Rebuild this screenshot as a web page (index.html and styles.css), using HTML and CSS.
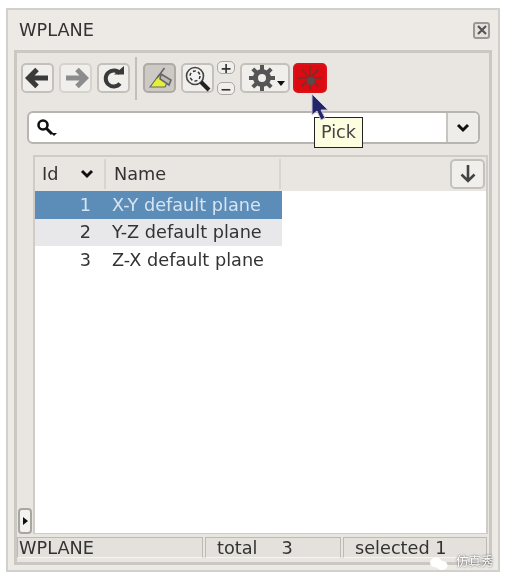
FILE: index.html
```html
<!DOCTYPE html>
<html lang="en">
<head>
  <meta charset="UTF-8" />
  <title>WPLANE</title>
  <link rel="stylesheet" href="styles.css">
</head>
<body>
  <div class="window">
    <header class="titlebar">
      <span>WPLANE</span>
      <button class="close-btn">
        <svg width="12" height="12" viewBox="0 0 12 12"><path d="M2 2l8 8M10 2l-8 8" stroke="#555" stroke-width="2.2" fill="none"/></svg>
      </button>
    </header>

    <main class="panel">
      <!-- Toolbar -->
      <div class="toolbar">
        <button class="tool">
          <svg width="26" height="22" viewBox="0 0 26 22"><path d="M12 2.500L3.500 11l8.500 8.500M4 11h19" stroke="#3a3a3a" stroke-width="5" fill="none"/></svg>
        </button>
        <button class="tool disabled">
          <svg width="26" height="22" viewBox="0 0 26 22"><path d="M14 2.500l8.500 8.500-8.500 8.500M22 11H3" stroke="#8c8c8c" stroke-width="5" fill="none"/></svg>
        </button>
        <button class="tool">
          <svg width="26" height="24" viewBox="0 0 26 24"><path d="M19 7.500A8 8 0 1 0 19 17.500" stroke="#3a3a3a" stroke-width="4" fill="none"/><path d="M13 8.500h10V0z" fill="#3a3a3a"/></svg>
        </button>
        <span class="sep"></span>
        <button class="tool pressed">
          <svg width="28" height="24" viewBox="0 0 28 24"><path d="M4 21l9-12 9 6-3 6z" fill="#e4f03c" stroke="#666" stroke-width="1.200"/><path d="M18.500 2L11 12" stroke="#666" stroke-width="1.600" fill="none"/><path d="M15 8l10 6-2 5-9-6z" fill="#bdbab6" stroke="#666" stroke-width="1.600"/></svg>
        </button>
        <button class="tool">
          <svg width="28" height="27" viewBox="0 0 28 27"><circle cx="11" cy="11" r="8.500" fill="#f2f2f2" stroke="#444" stroke-width="1.600"/><circle cx="11" cy="11" r="5" fill="none" stroke="#333" stroke-width="1.500" stroke-dasharray="3 2.200"/><path d="M17 17l8 8" stroke="#222" stroke-width="4"/></svg>
        </button>
        <div class="zoom-steps">
          <button class="step">+</button>
          <button class="step">&minus;</button>
        </div>
        <button class="tool wide">
          <svg width="28" height="28" viewBox="0 0 28 28"><circle cx="14" cy="14" r="6.500" fill="none" stroke="#555" stroke-width="5"/><path d="M14 1v6M14 21v6M1 14h6M21 14h6M4.800 4.800l4.200 4.200M19 19l4.200 4.200M23.200 4.800L19 9M9 19l-4.200 4.200" stroke="#555" stroke-width="4"/></svg>
          <span class="mini-arrow"></span>
        </button>
        <button class="tool pick">
          <svg width="26" height="26" viewBox="0 0 26 26"><path d="M13 1v24M1 13h24M4.500 4.500l17 17M21.500 4.500l-17 17" stroke="#8f2626" stroke-width="2"/><circle cx="14" cy="16" r="4" fill="#5a4a4a"/></svg>
        </button>
      </div>

      <!-- Search -->
      <div class="search">
        <div class="search-icon">
          <svg width="22" height="20" viewBox="0 0 22 20"><circle cx="7" cy="7" r="4.500" fill="none" stroke="#111" stroke-width="2.600"/><path d="M10 10l6 6" stroke="#111" stroke-width="3"/><path d="M15 15h6l-3 3z" fill="#111"/></svg>
        </div>
        <div class="search-drop">
          <svg width="14" height="10" viewBox="0 0 14 10"><path d="M2 2l5 5 5-5" stroke="#111" stroke-width="3" fill="none"/></svg>
        </div>
      </div>

      <!-- List -->
      <div class="list-area">
        <div class="side-strip">
          <button class="side-btn"><span class="side-arrow"></span></button>
        </div>
        <div class="list">
          <div class="list-head">
            <div class="col-id">
              <span>Id</span>
              <svg width="14" height="10" viewBox="0 0 14 10"><path d="M2 2l5 5 5-5" stroke="#111" stroke-width="3" fill="none"/></svg>
            </div>
            <div class="col-name">Name</div>
            <div class="col-rest">
              <button class="down-btn">
                <svg width="18" height="20" viewBox="0 0 18 20"><path d="M9 1v16M2.500 10.500L9 17l6.500-6.500" stroke="#444" stroke-width="2.600" fill="none"/></svg>
              </button>
            </div>
          </div>
          <div class="row selected"><span class="num">1</span><span>X-Y default plane</span></div>
          <div class="row alt"><span class="num">2</span><span>Y-Z default plane</span></div>
          <div class="row"><span class="num">3</span><span>Z-X default plane</span></div>
        </div>
      </div>

      <!-- Status bar -->
      <footer class="status">
        <div class="cell cell-name">WPLANE</div>
        <div class="cell cell-total"><span>total</span><span>3</span></div>
        <div class="cell cell-sel">selected 1</div>
      </footer>
    </main>

    <div class="tooltip">Pick</div>
    <svg class="cursor" width="20" height="28" viewBox="0 0 20 28"><path d="M1 1v21l5-4 4 9 4-2-4-8h7z" fill="#24246a" stroke="#c8c8d8" stroke-width="1"/></svg>
    <div class="watermark">
      <svg width="18" height="13" viewBox="0 0 18 13"><ellipse cx="6" cy="5.500" rx="6" ry="5" fill="#fff"/><ellipse cx="12" cy="8.500" rx="5.500" ry="4.500" fill="#fff"/></svg>
      <span>仿真秀</span>
    </div>
  </div>
</body>
</html>
```

FILE: styles.css
```css
* {
  margin: 0;
  padding: 0;
  box-sizing: border-box;
  font-family: 'DejaVu Sans', sans-serif;
}

body {
  background: #ffffff;
  color: #333;
  font-size: 17.7px;
}

button {
  display: flex;
  align-items: center;
  justify-content: center;
  background: #f1efec;
  border: 2px solid #c4c1bd;
  border-radius: 5px;
  color: #333;
}

/* Window frame */
.window {
  position: relative;
  width: 494px;
  height: 564px;
  margin: 8px 0 0 6px;
  padding: 0 6px 5px 6px;
  background: #edeae6;
  border: 2px solid #d2d0cd;
  display: flex;
  flex-direction: column;
  filter: blur(0.4px);
}

.titlebar {
  height: 40px;
  flex: none;
  display: flex;
  align-items: center;
  justify-content: space-between;
  padding: 0 2px 0 5px;
  color: #333;
}

.close-btn {
  width: 17px;
  height: 17px;
  background: #e6e3df;
  border: 2px solid #9a9794;
  border-radius: 3px;
}

/* Main panel */
.panel {
  flex: 1;
  min-height: 0;
  display: flex;
  flex-direction: column;
  background: #e9e6e2;
  border: 3px solid #cbc8c4;
  padding: 0 0 4px 0;
}

.toolbar {
  display: flex;
  align-items: center;
  height: 50px;
  flex: none;
  padding-left: 4px;
}

.tool {
  width: 33px;
  height: 30px;
  margin-right: 5px;
  flex: none;
}

.tool.disabled {
  border-color: #d6d3cf;
}

.sep {
  width: 2px;
  height: 43px;
  background: #c2bfbb;
  margin-right: 6px;
}

.tool.pressed {
  background: #cdcac6;
  border-color: #aeaba7;
}

.zoom-steps {
  display: flex;
  flex-direction: column;
  justify-content: space-between;
  height: 34px;
  margin: 0 5px 0 -2px;
}

.step {
  width: 18px;
  height: 13px;
  font-size: 14px;
  font-weight: bold;
  line-height: 1;
  border-width: 1px;
  border-color: #aaa7a3;
  border-radius: 5px;
}

.tool.wide {
  position: relative;
  width: 50px;
  margin-right: 3px;
  justify-content: flex-start;
  padding-left: 6px;
}

.mini-arrow {
  position: absolute;
  right: 3px;
  bottom: 5px;
  border: 4px solid transparent;
  border-top: 5px solid #111;
  border-bottom: 0;
}

.tool.pick {
  width: 34px;
  background: #dd0a12;
  border-color: #d8141a;
}

/* Search combo */
.search {
  display: flex;
  height: 33px;
  flex: none;
  margin: 8px 9px 0 10px;
  background: #ffffff;
  border: 2px solid #b8b5b1;
  border-radius: 6px;
  justify-content: space-between;
  align-items: stretch;
}

.search-icon {
  padding: 5px 0 0 7px;
}

.search-drop {
  width: 32px;
  background: #efedea;
  border-left: 2px solid #c8c5c1;
  border-radius: 0 5px 5px 0;
  display: flex;
  align-items: center;
  justify-content: center;
}

/* List */
.list-area {
  flex: 1;
  min-height: 0;
  display: flex;
  margin-top: 11px;
}

.side-strip {
  width: 16px;
  flex: none;
  display: flex;
  align-items: flex-end;
  padding-left: 1px;
}

.side-btn {
  width: 14px;
  height: 26px;
  border-radius: 4px;
  border-color: #a9a6a2;
  background: #f4f2ef;
}

.side-arrow {
  border: 4px solid transparent;
  border-left: 5px solid #111;
  border-right: 0;
}

.list {
  flex: 1;
  margin-right: 1px;
  background: #ffffff;
  border: 2px solid #cfccc8;
  border-bottom-width: 1px;
}

.list-head {
  display: flex;
  height: 34px;
  background: #e9e6e2;
}

.col-id {
  width: 71px;
  display: flex;
  align-items: center;
  justify-content: space-between;
  padding: 0 10px 0 7px;
  border-right: 2px solid #d8d5d1;
  margin: 2px 0;
}

.col-name {
  width: 175px;
  display: flex;
  align-items: center;
  padding-left: 8px;
  border-right: 2px solid #d8d5d1;
  margin: 2px 0;
}

.col-rest {
  flex: 1;
  display: flex;
  justify-content: flex-end;
  align-items: center;
  padding-right: 1px;
}

.down-btn {
  width: 35px;
  height: 30px;
}

.row {
  display: flex;
  align-items: center;
  width: 247px;
  height: 27.500px;
  gap: 21px;
}

.row .num {
  width: 56px;
  text-align: right;
}

.row.selected {
  background: #5c8db9;
  color: #d6e4f0;
}

.row.alt {
  background: #e8e8ea;
}

/* Status bar */
.status {
  display: flex;
  height: 21px;
  flex: none;
  margin-top: 3px;
  margin-right: 2px;
  gap: 2px;
}

.cell {
  background: #e4e1dd;
  border: 1px solid #bdbab6;
  border-bottom-color: #f6f5f3;
  display: flex;
  align-items: center;
  white-space: nowrap;
}

.cell-name {
  width: 186px;
  padding-left: 1px;
}

.cell-total {
  width: 136px;
  padding-left: 11px;
  gap: 24px;
}

.cell-sel {
  flex: 1;
  padding-left: 11px;
}

/* Overlays */
.tooltip {
  position: absolute;
  left: 306px;
  top: 107px;
  width: 49px;
  height: 31px;
  background: #fdfde0;
  border: 1.500px solid #222;
  text-align: center;
  line-height: 28px;
  color: #444;
}

.cursor {
  position: absolute;
  left: 303px;
  top: 83px;
}

.watermark {
  position: absolute;
  left: 422px;
  top: 541px;
  display: flex;
  align-items: flex-end;
  gap: 8px;
  color: #fff;
  font-size: 12.500px;
  text-shadow: 0 0 2px #333;
}

.watermark span {
  font-family: 'Noto Sans CJK SC', sans-serif;
}
```
